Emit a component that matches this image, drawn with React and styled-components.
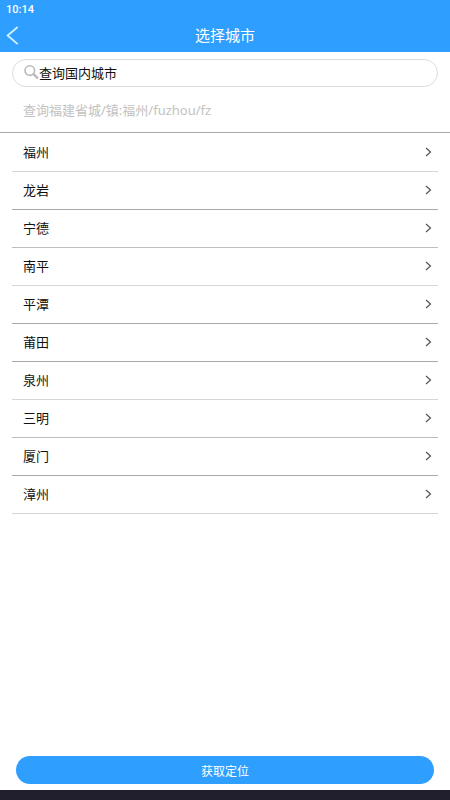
import React from "react";
import styled, { createGlobalStyle } from "styled-components";

const GlobalStyle = createGlobalStyle`
  * { box-sizing: border-box; }
  body {
    margin: 0;
    background: #fff;
    color: #111;
    font-family: Roboto, "Noto Sans CJK SC", sans-serif;
  }
  button, input { font: inherit; color: inherit; }
`;

const Page = styled.div`
  display: flex;
  flex-direction: column;
  min-height: 100vh;
`;

const Header = styled.header`
  padding-top: 1px;
  background: #2e9fff;
  color: #fff;
`;

const StatusBar = styled.div`
  padding: 0 6px;
  font-size: 11px;
  font-weight: 500;
  line-height: 18px;
`;

const TitleBar = styled.div`
  display: grid;
  grid-template-columns: 40px 1fr 40px;
  align-items: center;
  height: 33px;
`;

const BackButton = styled.button`
  display: flex;
  padding: 0 6px;
  border: 0;
  background: none;
`;

const Title = styled.h1`
  margin: 0;
  text-align: center;
  font-size: 15px;
  font-weight: 400;
  line-height: 32px;
`;

const SearchArea = styled.section`
  padding: 7px 12px 0;
  border-bottom: 1px solid #a9a9a9;
`;

const CitySearch = styled.button`
  display: flex;
  align-items: center;
  width: 100%;
  height: 28px;
  padding: 0 11px 2px;
  border: 1px solid #dcdcdc;
  border-radius: 14px;
  background: #fff;
  font-size: 13px;
`;

const FilterInput = styled.input`
  display: block;
  width: 100%;
  height: 45px;
  padding: 0 11px;
  border: 0;
  outline: 0;
  background: none;
  font-family: "Noto Sans", "Noto Sans CJK SC", sans-serif;
  font-size: 13px;
  &::placeholder { color: #c2c2c2; opacity: 1; }
`;

const CityList = styled.ul`
  flex: 1;
  margin: 0;
  padding: 1px 12px 0;
  list-style: none;
`;

const CityItem = styled.li`
  border-bottom: 1px solid ${({ $line }) => $line};
`;

const CityButton = styled.button`
  display: flex;
  align-items: center;
  justify-content: space-between;
  width: 100%;
  height: 37px;
  padding: 0 6px 2px 11px;
  border: 0;
  background: none;
  font-size: 13px;
`;

const Footer = styled.footer`
  padding: 0 16px 6px;
  border-bottom: 10px solid #211f2e;
`;

const LocateButton = styled.button`
  display: block;
  width: 100%;
  height: 28px;
  padding: 0;
  border: 0;
  border-radius: 14px;
  background: #2e9fff;
  color: #fff;
  font-size: 12px;
`;

const BackIcon = () => (
  <svg width="13" height="20" viewBox="0 0 13 20" fill="none" stroke="#d0f2ff" strokeWidth="1.8" aria-hidden="true">
    <path d="M11.7 1 1.6 9.5l10.1 8.6" />
  </svg>
);

const SearchIcon = () => (
  <svg width="15" height="16" viewBox="0 0 15 16" fill="none" stroke="#bababa" aria-hidden="true">
    <circle cx="5.8" cy="6.6" r="4.8" strokeWidth="1.6" />
    <path d="m9.6 10.2 3.8 3.6" strokeWidth="2.4" strokeLinecap="round" />
  </svg>
);

const ChevronIcon = () => (
  <svg width="7" height="10" viewBox="0 0 7 10" fill="none" stroke="#555" strokeWidth="1.2" aria-hidden="true">
    <path d="m1 1 4.5 4L1 9" />
  </svg>
);

const LIGHT = "#d6d6d6";
const MEDIUM = "#bdbdbd";
const DARK = "#a9a9a9";

const cities = [
  { name: "福州", line: LIGHT },
  { name: "龙岩", line: DARK },
  { name: "宁德", line: MEDIUM },
  { name: "南平", line: LIGHT },
  { name: "平潭", line: DARK },
  { name: "莆田", line: DARK },
  { name: "泉州", line: LIGHT },
  { name: "三明", line: MEDIUM },
  { name: "厦门", line: DARK },
  { name: "漳州", line: LIGHT },
];

export default function App() {
  return (
    <Page>
      <GlobalStyle />
      <Header>
        <StatusBar>10:14</StatusBar>
        <TitleBar>
          <BackButton type="button" aria-label="返回"><BackIcon /></BackButton>
          <Title>选择城市</Title>
        </TitleBar>
      </Header>
      <SearchArea>
        <CitySearch type="button"><SearchIcon />查询国内城市</CitySearch>
        <FilterInput
          type="text"
          aria-label="查询福建省城/镇"
          placeholder="查询福建省城/镇:福州/fuzhou/fz"
        />
      </SearchArea>
      <CityList>
        {cities.map(({ name, line }) => (
          <CityItem key={name} $line={line}>
            <CityButton type="button">{name}<ChevronIcon /></CityButton>
          </CityItem>
        ))}
      </CityList>
      <Footer>
        <LocateButton type="button">获取定位</LocateButton>
      </Footer>
    </Page>
  );
}
